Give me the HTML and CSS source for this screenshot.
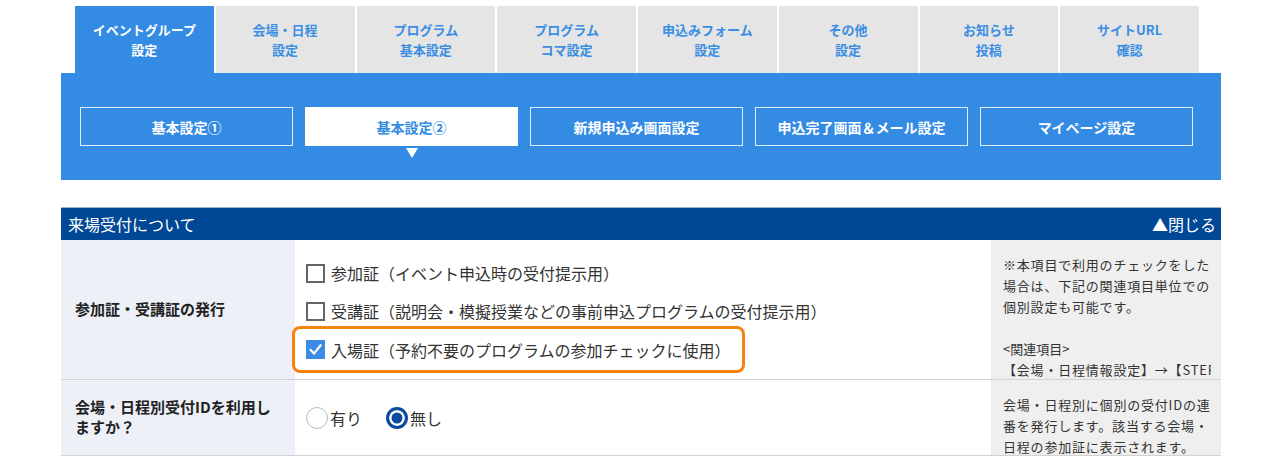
FILE: index.html
```html
<!DOCTYPE html>
<html>

<head>
  <meta charset="UTF-8">
  <link rel="stylesheet" href="styles.css">
</head>

<body>
  <div class="page">
    <ul class="tabs">
      <li class="tab active">イベントグループ<br>設定</li>
      <li class="tab">会場・日程<br>設定</li>
      <li class="tab">プログラム<br>基本設定</li>
      <li class="tab">プログラム<br>コマ設定</li>
      <li class="tab">申込みフォーム<br>設定</li>
      <li class="tab">その他<br>設定</li>
      <li class="tab">お知らせ<br>投稿</li>
      <li class="tab">サイトURL<br>確認</li>
    </ul>

    <div class="subnav">
      <a class="subnav-btn">基本設定①</a>
      <a class="subnav-btn current">基本設定②</a>
      <a class="subnav-btn">新規申込み画面設定</a>
      <a class="subnav-btn">申込完了画面＆メール設定</a>
      <a class="subnav-btn">マイページ設定</a>
    </div>

    <div class="section">
      <div class="section-head">
        <span>来場受付について</span>
        <span class="toggle">▲閉じる</span>
      </div>

      <div class="row">
        <div class="label">参加証・受講証の発行</div>
        <div class="field options">
          <label class="option">
            <span class="check"></span>参加証（イベント申込時の受付提示用）
          </label>
          <label class="option">
            <span class="check"></span>受講証（説明会・模擬授業などの事前申込プログラムの受付提示用）
          </label>
          <div class="highlight">
            <label class="option">
              <span class="check on">
                <svg width="19" height="19" viewBox="0 0 19 19">
                  <path d="M4.5 9.8 L8 13.6 L14.6 5.2" fill="none" stroke="#fff" stroke-width="2.2" stroke-linecap="round" stroke-linejoin="round" />
                </svg>
              </span>入場証（予約不要のプログラムの参加チェックに使用）
            </label>
          </div>
        </div>
        <div class="note">
          <div class="note-body">
            <p>※本項目で利用のチェックをした場合は、下記の関連項目単位での個別設定も可能です。</p>
            <p class="gap">&lt;関連項目&gt;</p>
            <p class="nowrap">【会場・日程情報設定】→【STEP2 受付設定】</p>
          </div>
        </div>
      </div>

      <div class="row">
        <div class="label">会場・日程別受付IDを利用しますか？</div>
        <div class="field radios">
          <label class="radio"><span class="dot"></span>有り</label>
          <label class="radio"><span class="dot on"></span>無し</label>
        </div>
        <div class="note">
          <div class="note-body">
            <p>会場・日程別に個別の受付IDの連番を発行します。該当する会場・日程の参加証に表示されます。</p>
          </div>
        </div>
      </div>
    </div>
  </div>
</body>

</html>
```

FILE: styles.css
```css
body {
  margin: 0;
  background-color: #fff;
  font-family: "Noto Sans CJK JP", "Noto Sans", sans-serif;
  color: #333;
}

.page {
  width: 1160px;
  margin-left: 61px;
  padding-top: 6px;
}

/* top tabs */
.tabs {
  display: flex;
  gap: 2px;
  width: 1124px;
  margin: 0 0 0 14px;
  padding: 0;
  list-style: none;
}

.tab {
  flex: 1;
  height: 67px;
  display: flex;
  align-items: center;
  justify-content: center;
  text-align: center;
  background-color: #e5e5e5;
  color: #3a8ee4;
  font-size: 13px;
  font-weight: bold;
  line-height: 20px;
}

.tab.active {
  background-color: #338be4;
  color: #fff;
}

/* sub navigation */
.subnav {
  display: flex;
  gap: 12px;
  height: 107px;
  box-sizing: border-box;
  padding: 34px 28px 0 19px;
  background-color: #338be4;
}

.subnav-btn {
  position: relative;
  flex: 1;
  height: 39px;
  box-sizing: border-box;
  display: flex;
  align-items: center;
  justify-content: center;
  border: 1px solid rgba(255, 255, 255, 0.85);
  color: #fff;
  font-size: 14px;
  font-weight: bold;
}

.subnav-btn.current {
  background-color: #fff;
  color: #338be4;
}

.subnav-btn.current:after {
  content: "";
  position: absolute;
  top: 100%;
  left: 50%;
  margin: 3px 0 0 -6px;
  border-style: solid;
  border-width: 10px 6px 0 6px;
  border-color: #fff transparent transparent transparent;
}

/* settings section */
.section {
  margin-top: 27px;
}

.section-head {
  display: flex;
  justify-content: space-between;
  align-items: center;
  height: 33px;
  box-sizing: border-box;
  padding: 0 5px 0 7px;
  border-top: 1px solid #9fb3d1;
  background-color: #004796;
  color: #fff;
  font-size: 16px;
}

.row {
  display: grid;
  grid-template-columns: 234px 696px 230px;
  border-bottom: 1px solid #d2d2d2;
}

.label {
  display: flex;
  align-items: center;
  padding: 17px 18px 18px 14px;
  background-color: #edf1f7;
  color: #222;
  font-size: 15px;
  font-weight: bold;
  line-height: 20px;
}

.field {
  font-size: 16px;
  color: #333;
}

.options {
  padding: 14px 0 6px 0;
}

.option {
  display: flex;
  align-items: center;
  height: 38px;
  padding-left: 11px;
  white-space: nowrap;
}

.check {
  width: 19px;
  height: 19px;
  box-sizing: border-box;
  margin-right: 6px;
  border: 2px solid #666;
  background-color: #fff;
}

.check.on {
  border: none;
  background-color: #3a8be4;
}

.check svg {
  display: block;
}

.highlight {
  width: fit-content;
  margin: -4px 0 0 -3px;
  padding: 0 11px 0 0;
  border: 3px solid #f8820f;
  border-radius: 8px;
}

.highlight .option {
  height: 41px;
}

.radios {
  display: flex;
  align-items: center;
  padding-left: 11px;
}

.radio {
  display: flex;
  align-items: center;
  margin-right: 24px;
}

.dot {
  width: 22px;
  height: 22px;
  box-sizing: border-box;
  margin-right: 2px;
  border: 1.5px solid #b9b9b9;
  border-radius: 50%;
  background-color: #fff;
}

.dot.on {
  border: 3px solid #0b4a9e;
  background-color: #0b4a9e;
  box-shadow: inset 0 0 0 2.5px #fff;
}

/* side notes: sized by the row, extra text is clipped */
.note {
  contain: size;
  padding: 14px 10px 0 12px;
  background-color: #efefef;
  color: #333;
  font-size: 13px;
  letter-spacing: 0.8px;
  line-height: 21px;
}

.note-body {
  height: 100%;
  overflow: hidden;
}

.note p {
  margin: 0;
}

.note .gap {
  margin-top: 21px;
  letter-spacing: 0;
}

.note .nowrap {
  white-space: nowrap;
}
```
